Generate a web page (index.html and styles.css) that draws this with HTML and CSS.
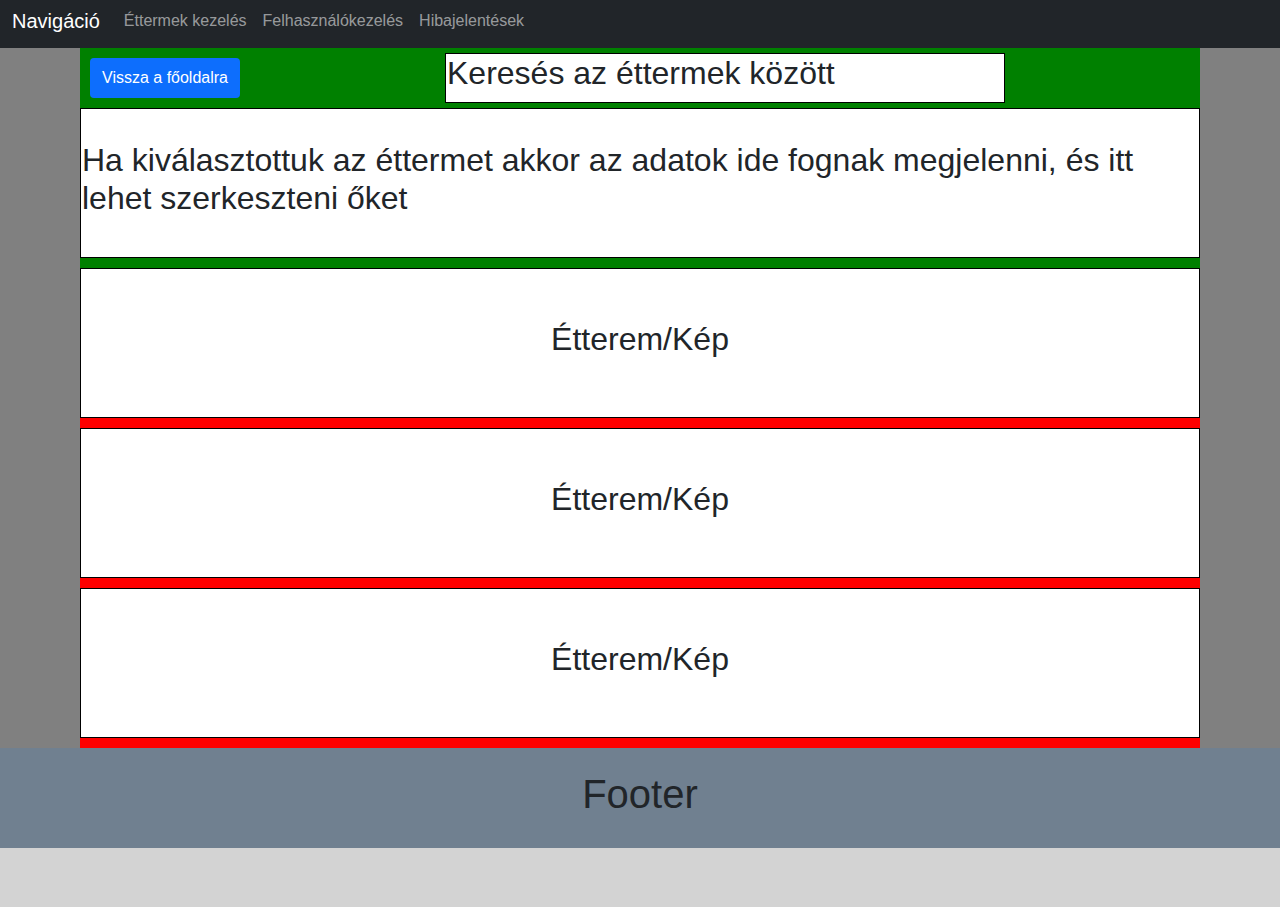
FILE: index.html
```html
<!DOCTYPE html>
<html lang="hu">
<head>
<meta charset="utf-8">
<title>Éttermek kezelés</title>
<link rel="stylesheet" href="styles.css">
</head>
<body>
<nav class="navbar">
  <a class="brand" href="#">Navigáció</a>
  <a class="nav-link" href="#">Éttermek kezelés</a>
  <a class="nav-link" href="#">Felhasználókezelés</a>
  <a class="nav-link" href="#">Hibajelentések</a>
</nav>
<main class="page">
  <div class="container">
    <div class="toolbar">
      <button class="btn">Vissza a főoldalra</button>
      <div class="search">Keresés az éttermek között</div>
    </div>
    <div class="details-wrap">
      <div class="details">Ha kiválasztottuk az éttermet akkor az adatok ide fognak megjelenni, és itt lehet szerkeszteni őket</div>
    </div>
    <div class="item"><div class="card">Étterem/Kép</div></div>
    <div class="item"><div class="card">Étterem/Kép</div></div>
    <div class="item"><div class="card">Étterem/Kép</div></div>
  </div>
</main>
<footer class="footer">Footer</footer>
<div class="bottom"></div>
</body>
</html>
```
FILE: styles.css
```css
* { box-sizing: border-box; }
html, body { margin: 0; padding: 0; }
body {
  font-family: "Liberation Sans", Arial, sans-serif;
  color: #212529;
  background: #d3d3d3;
  height: 907px;
  overflow: hidden;
}
.navbar {
  height: 48px;
  background: #212529;
  display: flex;
  align-items: center;
  padding: 0 12px 6px;
}
.brand {
  color: #fff;
  font-size: 20px;
  text-decoration: none;
  margin-right: 24px;
}
.nav-link {
  color: rgba(255,255,255,0.55);
  font-size: 16px;
  text-decoration: none;
  margin-right: 16px;
}
.page {
  background: #808080;
  height: 700px;
}
.container {
  width: 1120px;
  margin: 0 auto;
}
.toolbar {
  background: #008000;
  height: 60px;
  display: flex;
  align-items: flex-start;
}
.btn {
  margin: 10px 0 0 10px;
  width: 150px;
  height: 40px;
  background: #0d6efd;
  color: #fff;
  border: none;
  border-radius: 4px;
  font-family: "Liberation Sans", Arial, sans-serif;
  font-size: 16px;
  padding: 0;
}
.search {
  margin: 5px 0 0 205px;
  width: 560px;
  height: 50px;
  background: #fff;
  border: 1px solid #000;
  font-size: 32px;
  line-height: 38px;
  padding-left: 1px;
}
.details-wrap {
  background: #008000;
  padding-bottom: 10px;
}
.details {
  height: 150px;
  background: #fff;
  border: 1px solid #000;
  font-size: 32px;
  line-height: 38px;
  padding: 32px 0 0 1px;
}
.item {
  background: #ff0000;
  padding-bottom: 10px;
}
.card {
  height: 150px;
  background: #fff;
  border: 1px solid #000;
  display: flex;
  align-items: center;
  justify-content: center;
  font-size: 32px;
  padding-bottom: 8px;
}
.footer {
  height: 100px;
  background: #708090;
  display: flex;
  align-items: center;
  justify-content: center;
  font-size: 40px;
  padding-bottom: 8px;
}
.bottom {
  height: 59px;
  background: #d3d3d3;
}
```
